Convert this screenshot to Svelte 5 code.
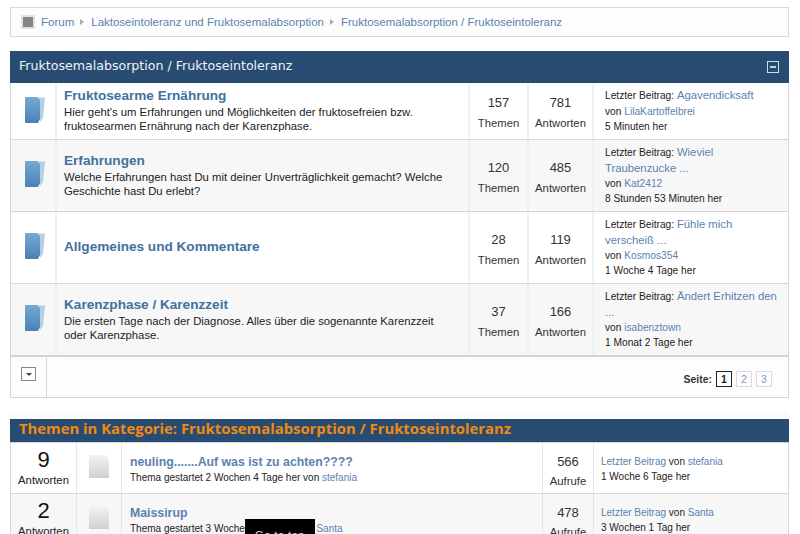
<script>
  const forums = [
    { title: "Fruktosearme Ernährung", desc: "Hier geht's um Erfahrungen und Möglichkeiten der fruktosefreien bzw. fruktosearmen Ernährung nach der Karenzphase.", topics: 157, replies: 781, last: "Agavendicksaft", by: "LilaKartoffelbrei", when: "5 Minuten her" },
    { title: "Erfahrungen", desc: "Welche Erfahrungen hast Du mit deiner Unverträglichkeit gemacht? Welche Geschichte hast Du erlebt?", topics: 120, replies: 485, last: "Wieviel Traubenzucke ...", by: "Kat2412", when: "8 Stunden 53 Minuten her" },
    { title: "Allgemeines und Kommentare", desc: "", topics: 28, replies: 119, last: "Fühle mich verscheiß ...", by: "Kosmos354", when: "1 Woche 4 Tage her" },
    { title: "Karenzphase / Karenzzeit", desc: "Die ersten Tage nach der Diagnose. Alles über die sogenannte Karenzzeit oder Karenzphase.", topics: 37, replies: 166, last: "Ändert Erhitzen den ...", by: "isabenztown", when: "1 Monat 2 Tage her" }
  ];
  const threads = [
    { replies: 9, title: "neuling.......Auf was ist zu achten????", started: "2 Wochen 4 Tage", by: "stefania", views: 566, lastBy: "stefania", when: "1 Woche 6 Tage her" },
    { replies: 2, title: "Maissirup", started: "3 Wochen 1 Tag", by: "Santa", views: 478, lastBy: "Santa", when: "3 Wochen 1 Tag her" }
  ];
</script>

<div class="page">
  <nav class="crumbs">
    <span class="home"></span>
    <a href="#a">Forum</a><i></i>
    <a href="#a">Laktoseintoleranz und Fruktosemalabsorption</a><i></i>
    <a href="#a">Fruktosemalabsorption / Fruktoseintoleranz</a>
  </nav>

  <section class="block">
    <header class="head">
      <h2>Fruktosemalabsorption / Fruktoseintoleranz</h2>
      <span class="collapse"></span>
    </header>
    {#each forums as f, i}
      <div class="forum" class:alt={i % 2 === 1}>
        <div class="ficon">
          <svg width="20" height="26" viewBox="0 0 20 26">
            <defs>
              <linearGradient id="fold{i}" x1="0" y1="0" x2="0" y2="1">
                <stop offset="0" stop-color="#76a8d5" />
                <stop offset="1" stop-color="#4a80b3" />
              </linearGradient>
            </defs>
            <path d="M11 .5H20L19 11 18 21 15 25V3z" fill="#b7cfe4" />
            <path d="M1 0H12L15 3V22L13 26H1Q0 26 0 25V1Q0 0 1 0z" fill="url(#fold{i})" />
          </svg>
        </div>
        <div class="fmain">
          <a class="ftitle" href="#a">{f.title}</a>
          {#if f.desc}<p>{f.desc}</p>{/if}
        </div>
        <div class="stat"><b>{f.topics}</b><span>Themen</span></div>
        <div class="stat wide"><b>{f.replies}</b><span>Antworten</span></div>
        <div class="flast">
          <div class="lastline">Letzter Beitrag: <a href="#a">{f.last}</a></div>
          <div>von <a href="#a">{f.by}</a></div>
          <div>{f.when}</div>
        </div>
      </div>
    {/each}
    <div class="foot">
      <div class="toggle"><span><em></em></span></div>
      <div class="pager">
        <b>Seite:</b>
        <span class="pg current">1</span>
        <a class="pg" href="#a">2</a>
        <a class="pg" href="#a">3</a>
      </div>
    </div>
  </section>

  <section class="block topics">
    <header class="head orange"><h2>Themen in Kategorie: Fruktosemalabsorption / Fruktoseintoleranz</h2></header>
    {#each threads as t, i}
      <div class="thread" class:alt={i % 2 === 1}>
        <div class="count"><b>{t.replies}</b><span>Antworten</span></div>
        <div class="ticon">
          <svg width="20" height="23" viewBox="0 0 20 23">
            <defs>
              <linearGradient id="page{i}" x1="0" y1="0" x2="0" y2="1">
                <stop offset="0" stop-color="#f3f3f3" />
                <stop offset="1" stop-color="#d0d0d0" />
              </linearGradient>
            </defs>
            <path d="M0 0h16l4 4v19H0z" fill="url(#page{i})" />
          </svg>
        </div>
        <div class="tmain">
          <a class="ttitle" href="#a">{t.title}</a>
          <div class="started">Thema gestartet {t.started} her von <a href="#a">{t.by}</a></div>
        </div>
        <div class="views"><b>{t.views}</b><span>Aufrufe</span></div>
        <div class="tlast">
          <div><a href="#a">Letzter Beitrag</a> von <a href="#a">{t.lastBy}</a></div>
          <div>{t.when}</div>
        </div>
      </div>
    {/each}
  </section>

  <div class="totop">Go to top</div>
</div>

<style>
  :global(body) {
    margin: 0;
    background: #fff;
    overflow: hidden;
  }
  .page {
    height: 534px;
    overflow: hidden;
    padding: 7px 11px 0 10px;
    box-sizing: border-box;
    font-family: "Liberation Sans", Arial, sans-serif;
    color: #222;
    font-size: 12px;
    position: relative;
  }
  a {
    color: #4a76a8;
    text-decoration: none;
  }
  .crumbs {
    height: 30px;
    box-sizing: border-box;
    border: 1px solid #d8d8d8;
    background: #fdfdfd;
    display: flex;
    align-items: center;
    padding-left: 10px;
    font-size: 11.5px;
  }
  .crumbs a {
    color: #5b82b0;
  }
  .crumbs i {
    width: 0;
    height: 0;
    border-left: 4px solid #aaa;
    border-top: 3px solid transparent;
    border-bottom: 3px solid transparent;
    margin: 0 7px 0 6px;
  }
  .home {
    width: 10px;
    height: 10px;
    background: #858585;
    border: 2px solid #e2e2e2;
    margin-right: 6px;
  }
  .block {
    margin-top: 14px;
  }
  .head {
    height: 32px;
    box-sizing: border-box;
    background: #284c71;
    display: flex;
    align-items: center;
    justify-content: space-between;
    padding: 0 10px 0 9px;
  }
  .head h2 {
    margin: -4px 0 0;
    font-family: "DejaVu Sans", sans-serif;
    font-size: 12.6px;
    font-weight: normal;
    color: #eef2f6;
  }
  .collapse {
    width: 10px;
    height: 10px;
    border: 1px solid #d5dde5;
    position: relative;
    display: block;
  }
  .collapse::after {
    content: "";
    position: absolute;
    left: 2px;
    right: 2px;
    top: 4px;
    height: 2px;
    background: #c9d1d9;
  }
  .forum {
    display: grid;
    grid-template-columns: 46px 1fr 59px 65px 194px;
    height: 72px;
    box-sizing: border-box;
    border: 1px solid #d6d6d6;
    border-top: 0;
    background: #fff;
  }
  .head + .forum {
    height: 57px;
  }
  .forum.alt {
    background: #f7f7f7;
  }
  .ficon,
  .fmain,
  .stat {
    border-right: 2px solid #f0f0f0;
  }
  .ficon {
    display: flex;
    align-items: center;
    justify-content: center;
    padding: 0 0 3px 3px;
  }
  .fmain {
    padding: 0 18px 2px 7px;
    display: flex;
    flex-direction: column;
    justify-content: center;
  }
  .ftitle {
    font-size: 13.6px;
    font-weight: bold;
    color: #41719f;
    line-height: 18px;
  }
  .fmain p {
    margin: 0;
    font-size: 11.3px;
    line-height: 14px;
    color: #222;
  }
  .stat {
    display: flex;
    flex-direction: column;
    align-items: center;
    justify-content: center;
    gap: 6px;
    padding-top: 4px;
  }
  .head + .forum .stat {
    padding-top: 2px;
  }
  .stat b {
    font-weight: normal;
    font-size: 13px;
    line-height: 15px;
    color: #333;
  }
  .stat span {
    font-size: 11.3px;
    line-height: 14px;
    color: #333;
  }
  .flast {
    padding: 0 9px 0 11px;
    display: flex;
    flex-direction: column;
    justify-content: center;
    font-size: 10.2px;
    line-height: 15px;
    color: #222;
  }
  .flast a {
    color: #5b82b0;
  }
  .lastline a {
    font-size: 11.3px;
  }
  .lastline {
    line-height: 15.5px;
  }
  .foot {
    height: 42px;
    box-sizing: border-box;
    border: 1px solid #d6d6d6;
    border-top-color: #cfcfcf;
    display: flex;
    background: #fdfdfd;
  }
  .toggle {
    width: 36px;
    border-right: 1px solid #d6d6d6;
    display: flex;
    justify-content: center;
    padding-top: 10px;
    box-sizing: border-box;
  }
  .toggle span {
    width: 13px;
    height: 12px;
    border: 1px solid #888;
    display: flex;
    align-items: center;
    justify-content: center;
  }
  .toggle em {
    width: 0;
    height: 0;
    border-top: 3px solid #444;
    border-left: 3px solid transparent;
    border-right: 3px solid transparent;
  }
  .pager {
    flex: 1;
    display: flex;
    align-items: center;
    justify-content: flex-end;
    gap: 4px;
    padding: 3px 16px 0 0;
    font-size: 10.5px;
    box-sizing: border-box;
  }
  .pager b {
    color: #333;
  }
  .pg {
    width: 14px;
    height: 14px;
    border: 1px solid #dcdcdc;
    display: flex;
    align-items: center;
    justify-content: center;
    color: #7c9cc0;
    font-size: 10.5px;
  }
  .pg.current {
    border: 1px solid #222;
    font-weight: bold;
    color: #222;
  }
  .topics {
    margin-top: 21px;
  }
  .head.orange {
    height: 24px;
    padding-left: 9px;
    border-bottom: 1px solid #cfd6dd;
    box-shadow: 0 -7px 0 #fbfbfb;
  }
  .orange h2 {
    margin: -6px 0 0;
    font-weight: 700;
    font-size: 14.85px;
    color: #f08a10;
    font-family: "Open Sans", sans-serif;
  }
  .thread {
    display: grid;
    grid-template-columns: 66px 45px 1fr 51px 194px;
    height: 51px;
    box-sizing: border-box;
    border: 1px solid #d6d6d6;
    border-top: 0;
    background: #fff;
  }
  .thread.alt {
    background: #f7f7f7;
  }
  .count,
  .ticon,
  .tmain,
  .views {
    border-right: 1px solid #e6e6e6;
  }
  .count,
  .views {
    display: flex;
    flex-direction: column;
    align-items: center;
    padding-top: 6px;
    box-sizing: border-box;
  }
  .count b {
    font-weight: normal;
    font-size: 22px;
    line-height: 22px;
    color: #111;
  }
  .count span {
    font-size: 11.3px;
    line-height: 16px;
    color: #222;
    margin-top: 1px;
  }
  .views b {
    font-weight: normal;
    font-size: 13px;
    line-height: 15px;
    margin-top: 5px;
    color: #333;
  }
  .views span {
    font-size: 11.3px;
    line-height: 14px;
    margin-top: 5px;
    color: #333;
  }
  .ticon {
    display: flex;
    justify-content: center;
    padding-top: 12px;
    box-sizing: border-box;
  }
  .tmain {
    padding: 12px 8px 0;
  }
  .ttitle {
    display: block;
    font-size: 12.3px;
    font-weight: bold;
    line-height: 15px;
    color: #5b82ad;
  }
  .started {
    font-size: 10px;
    line-height: 15px;
  }
  .started a,
  .tlast a {
    color: #5b82b0;
  }
  .tlast {
    padding: 11px 0 0 7px;
    font-size: 10px;
    line-height: 15px;
  }
  .totop {
    position: absolute;
    left: 245px;
    top: 519px;
    width: 70px;
    height: 40px;
    background: #000;
    color: #ddd;
    font-size: 11px;
    text-align: center;
    line-height: 32px;
    letter-spacing: 0.5px;
  }
</style>
